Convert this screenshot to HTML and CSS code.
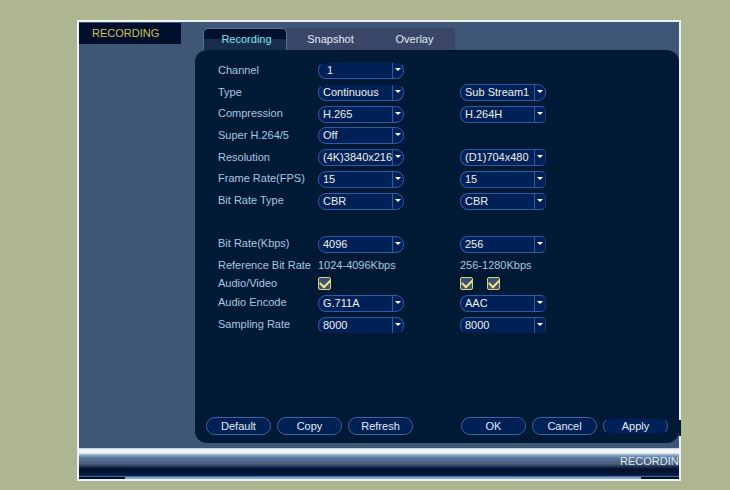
FILE: index.html
```html
<!DOCTYPE html>
<html lang="en">
<head>
    <meta charset="utf-8">
    <title>Recording</title>
    <link rel="stylesheet" href="styles.css">
</head>
<body>
    <div class="window">
        <div class="main">
            <nav class="sidebar">
                <a href="#recording" class="menu-item">RECORDING</a>
            </nav>

            <div class="content">
                <div class="tabs">
                    <button type="button" class="tab active">Recording</button>
                    <button type="button" class="tab">Snapshot</button>
                    <button type="button" class="tab">Overlay</button>
                </div>

                <form class="panel">
                    <div class="fields stream">
                        <label for="channel">Channel</label>
                        <span class="select open-top indent"><select id="channel"><option>1</option></select></span>
                        <span></span>

                        <label for="type">Type</label>
                        <span class="select open-top"><select id="type"><option>Continuous</option></select></span>
                        <span class="select"><select aria-label="Sub stream"><option>Sub Stream1</option></select></span>

                        <label for="compression">Compression</label>
                        <span class="select"><select id="compression"><option>H.265</option></select></span>
                        <span class="select sub"><select aria-label="Sub compression"><option>H.264H</option></select></span>

                        <label for="super">Super H.264/5</label>
                        <span class="select"><select id="super"><option>Off</option></select></span>
                        <span></span>

                        <label for="resolution">Resolution</label>
                        <span class="select"><select id="resolution"><option>(4K)3840x216</option></select></span>
                        <span class="select sub"><select aria-label="Sub resolution"><option>(D1)704x480</option></select></span>

                        <label for="fps">Frame Rate(FPS)</label>
                        <span class="select"><select id="fps"><option>15</option></select></span>
                        <span class="select sub"><select aria-label="Sub frame rate"><option>15</option></select></span>

                        <label for="rate-type">Bit Rate Type</label>
                        <span class="select"><select id="rate-type"><option>CBR</option></select></span>
                        <span class="select sub"><select aria-label="Sub bit rate type"><option>CBR</option></select></span>
                    </div>

                    <div class="fields rates">
                        <label for="bit-rate">Bit Rate(Kbps)</label>
                        <span class="select"><select id="bit-rate"><option>4096</option></select></span>
                        <span class="select sub"><select aria-label="Sub bit rate"><option>256</option></select></span>

                        <span>Reference Bit Rate</span>
                        <span>1024-4096Kbps</span>
                        <span>256-1280Kbps</span>

                        <label for="audio">Audio/Video</label>
                        <span class="checks"><input type="checkbox" id="audio" checked></span>
                        <span class="checks">
                            <input type="checkbox" aria-label="Sub video" checked>
                            <input type="checkbox" aria-label="Sub audio" checked>
                        </span>

                        <label for="encode">Audio Encode</label>
                        <span class="select"><select id="encode"><option>G.711A</option></select></span>
                        <span class="select sub"><select aria-label="Sub audio encode"><option>AAC</option></select></span>

                        <label for="sampling">Sampling Rate</label>
                        <span class="select open-bottom"><select id="sampling"><option>8000</option></select></span>
                        <span class="select sub open-bottom"><select aria-label="Sub sampling rate"><option>8000</option></select></span>
                    </div>

                    <div class="buttons">
                        <div class="group">
                            <button type="button">Default</button>
                            <button type="button">Copy</button>
                            <button type="button">Refresh</button>
                        </div>
                        <div class="group">
                            <button type="button">OK</button>
                            <button type="button">Cancel</button>
                            <button type="button" class="apply">Apply</button>
                        </div>
                        <span class="notch"></span>
                    </div>
                </form>
            </div>
        </div>

        <div class="status">
            <span class="status-title">RECORDIN</span>
            <div class="status-edge"></div>
        </div>
    </div>
</body>
</html>
```

FILE: styles.css
```css
* {
    box-sizing: border-box;
}

body {
    margin: 0;
    padding: 20px 49px 9px 77px;
    background: #aeb591;
    font-family: "Liberation Sans", Arial, sans-serif;
    font-size: 11px;
    line-height: 16px;
    color: #a9c6e2;
}

button, select {
    font: inherit;
}

.window {
    border: 2px solid #f0f2f4;
    background: #3f5777;
}

.main {
    display: flex;
    gap: 14px;
    padding-bottom: 5px;
}

/* Left menu */
.sidebar {
    flex: 0 0 102px;
}

.menu-item {
    display: block;
    margin-top: 1px;
    padding: 2px 13px 3px;
    background: #000f2b;
    color: #d2c15c;
    text-decoration: none;
}

/* Tabs */
.content {
    flex: 1;
    min-width: 0;
    padding-top: 6px;
}

.tabs {
    display: flex;
    width: fit-content;
    margin-left: 8px;
    background: #3a4668;
}

.tab {
    width: 84px;
    height: 22px;
    padding: 0 0 2px 3px;
    border: 1px solid transparent;
    border-bottom: 0;
    background: none;
    color: #e3eaf2;
}

.tab.active {
    border-color: #5b7391;
    border-radius: 5px 5px 0 0;
    background: linear-gradient(#00112d 50%, #182c4c 50%);
    color: #7fe3ee;
}

/* Form */
.panel {
    padding: 9px 11px 8px;
    border-radius: 12px;
    background: #001a35;
}

.fields {
    display: grid;
    grid-template-columns: 100px 142px 86px;
    align-items: center;
    margin-left: 12px;
    white-space: nowrap;
}

.stream {
    grid-auto-rows: 1fr;
    height: 152px;
    margin-bottom: 21px;
}

.rates {
    grid-template-rows: 22px 21px 16px 22px 22px;
}

.select {
    position: relative;
    width: 86px;
    height: 17px;
    margin-top: 2px;
}

.select select {
    display: block;
    appearance: none;
    width: 100%;
    height: 100%;
    padding: 0 10px 0 4px;
    border: 1px solid #2c5ca3;
    border-radius: 8px;
    background: #002157;
    color: #eef0ea;
    line-height: 15px;
}

/* Line and arrow on the right of a drop-down */
.select::before {
    content: "";
    position: absolute;
    top: 1px;
    bottom: 1px;
    right: 11px;
    border-left: 1px solid #2c5ca3;
}

.select::after {
    content: "";
    position: absolute;
    top: 6px;
    right: 3px;
    border: 3px solid transparent;
    border-top-color: #fff;
    border-bottom: 0;
    pointer-events: none;
}

.sub select {
    border-radius: 8px 5px 5px 8px;
    border-right-color: #173c74;
}

.indent select {
    padding-left: 8px;
}

.open-top select {
    border-top-color: #001a35;
}

.open-bottom select {
    border-bottom-color: #001a35;
}

.checks {
    display: flex;
    gap: 14px;
}

.checks input {
    appearance: none;
    display: grid;
    place-items: center;
    width: 13px;
    height: 13px;
    margin: 0;
    border: 1px solid #e2d078;
    border-radius: 2px;
    background: #3b5273;
}

.checks input:checked::before {
    content: "";
    width: 8px;
    height: 5px;
    border: solid #f3e48e;
    border-width: 0 0 2px 2px;
    transform: translateY(-1px) rotate(-45deg);
}

/* Bottom buttons */
.buttons {
    position: relative;
    display: flex;
    justify-content: space-between;
    margin-top: 82px;
}

.group {
    display: flex;
    gap: 6px;
}

.group button {
    width: 65px;
    height: 18px;
    padding: 0;
    border: 1px solid #3468b0;
    border-radius: 9px;
    background: #002157;
    box-shadow: inset 0 0 0 1px #001a3f;
    color: #e1eaf4;
    line-height: 16px;
}

.group .apply {
    border-top-color: #001a35;
    border-bottom-color: #001a35;
}

.notch {
    position: absolute;
    top: 3px;
    right: -13px;
    width: 2px;
    height: 16px;
    background: #001a35;
}

/* Status bar */
.status {
    position: relative;
    overflow: hidden;
    height: 31px;
    background: linear-gradient(#b9cbe2 0, #f4f6f8 2px, #f4f6f8 5px, #8ba9ca 7px, #587499 10px, #4c5c7b 16px, #172c4d 19px, #00122e 21px, #001536 26px, #0b3064 28px, #7c9dc4 29px, #93b0d2 31px);
}

.status-title {
    display: block;
    width: 59px;
    margin: 5px 0 0 auto;
    color: #dfe6ef;
}

.status-edge {
    position: absolute;
    left: 0;
    right: 0;
    bottom: 0;
    height: 2px;
    border: solid #000f2b;
    border-width: 0 38px 0 46px;
}
```
